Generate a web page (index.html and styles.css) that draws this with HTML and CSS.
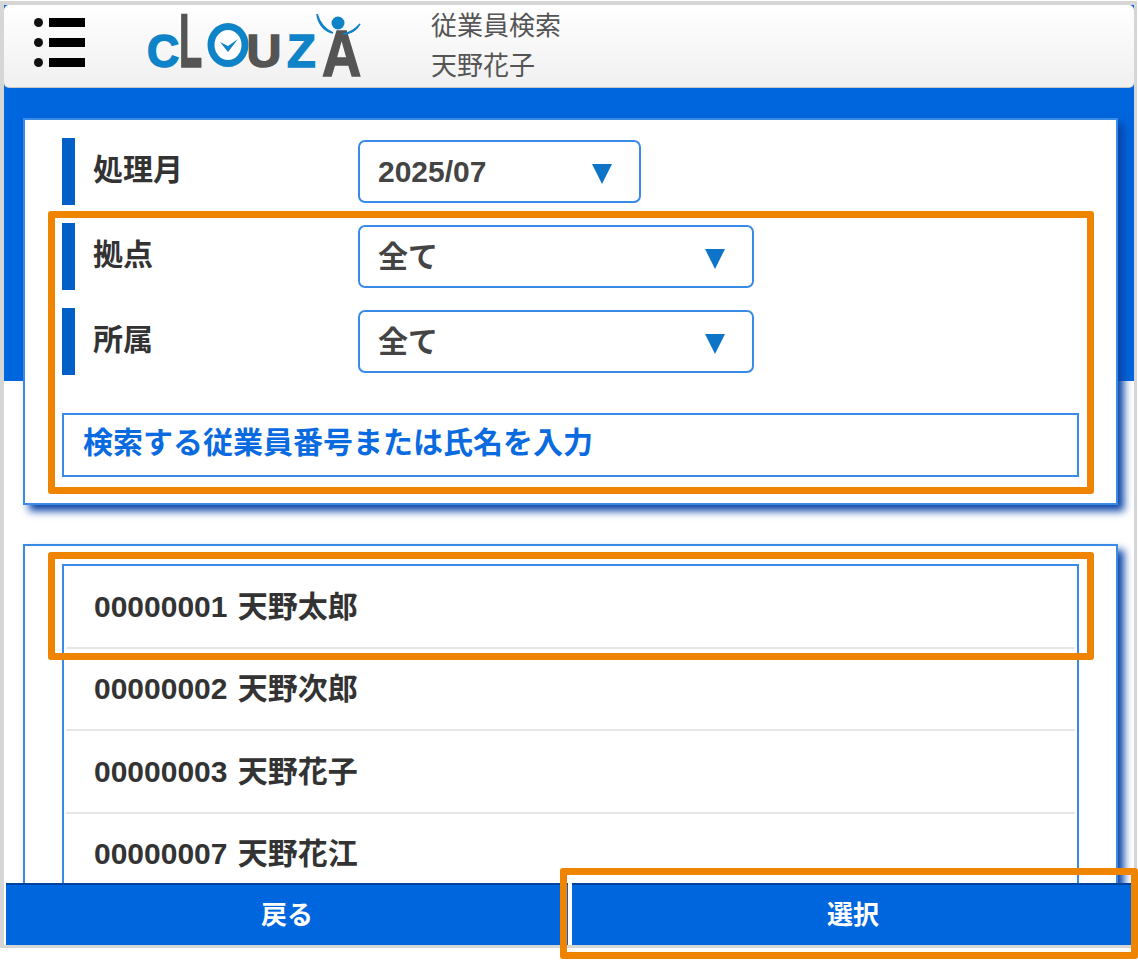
FILE: index.html
```html
<!DOCTYPE html>
<html lang="ja">
<head>
<meta charset="utf-8">
<title>従業員検索</title>
<link rel="stylesheet" href="styles.css">
</head>
<body>
<div class="screen">
  <div class="frame">
    <header class="header-wrap">
      <div class="header">
        <div class="menu" aria-label="menu">
          <div class="menu-row"><span class="dot"></span><span class="bar"></span></div>
          <div class="menu-row"><span class="dot"></span><span class="bar"></span></div>
          <div class="menu-row"><span class="dot"></span><span class="bar"></span></div>
        </div>
        <svg class="logo" width="216" height="70" viewBox="0 0 216 70" aria-label="cLOUZA">
          <g class="logo-text">
            <text class="blue" transform="translate(-1 55) scale(.95 1)" font-size="47">C</text>
            <text class="gray" transform="translate(31 55) scale(.5 1)" font-size="76">L</text>
            <text class="gray" transform="translate(98.6 55) scale(1.03 1)" font-size="47">U</text>
            <text class="blue" transform="translate(139 55)" font-size="47">Z</text>
            <text class="gray" transform="translate(174 64) scale(.85 1)" font-size="64">A</text>
          </g>
          <ellipse cx="80" cy="33" rx="17" ry="18.5" fill="#fff" stroke="#0f83c7" stroke-width="7"/>
          <path d="M72 30 L80 40 L90 27 L80 34 Z" fill="#0f83c7"/>
          <circle cx="190" cy="11" r="6.5" fill="#0f83c7"/>
          <path d="M169 2 C172 12 178 18 185 21 C178 20 170 13 169 2 Z" fill="#0f83c7" stroke="#0f83c7" stroke-width="1.5"/>
          <path d="M212 12 C207 18 201 21 195 22 C202 22 208 19 212 12 Z" fill="#0f83c7" stroke="#0f83c7" stroke-width="1.5"/>
        </svg>
        <div class="title">
          <div>従業員検索</div>
          <div>天野花子</div>
        </div>
      </div>
    </header>

    <main class="main">
      <section class="panel filters">
        <div class="row">
          <div class="label">処理月</div>
          <div class="select short"><span>2025/07</span><i class="arrow"></i></div>
        </div>
        <div class="row">
          <div class="label">拠点</div>
          <div class="select wide"><span>全て</span><i class="arrow"></i></div>
        </div>
        <div class="row">
          <div class="label">所属</div>
          <div class="select wide"><span>全て</span><i class="arrow"></i></div>
        </div>
        <div class="search">検索する従業員番号または氏名を入力</div>
      </section>

      <section class="panel results">
        <ul class="list">
          <li class="item">00000001 天野太郎</li>
          <li class="item">00000002 天野次郎</li>
          <li class="item">00000003 天野花子</li>
          <li class="item">00000007 天野花江</li>
        </ul>
      </section>
    </main>

    <footer class="footer">
      <button class="btn back">戻る</button>
      <button class="btn select-btn">選択</button>
    </footer>
  </div>

  <div class="mark mark-filters"></div>
  <div class="mark mark-first"></div>
  <div class="mark mark-select"></div>
</div>
</body>
</html>
```
FILE: styles.css
```css
* { box-sizing: border-box; }

html, body {
  margin: 0;
  padding: 0;
  background: #fff;
}

body {
  font-family: "Liberation Sans", "Noto Sans CJK JP", sans-serif;
  color: #333;
}

.screen {
  position: relative;
  width: 1138px;
  height: 967px;
  overflow: hidden;
  padding: 1px 1px 0 0;
}

.frame {
  width: 1137px;
  height: 947px;
  border: 3px solid #d6d6d6;
  border-top-width: 4px;
  border-left-width: 4px;
  background: #fff;
}

.header-wrap {
  background: #0066dd;
  height: 83px;
}

.header {
  height: 83px;
  display: flex;
  align-items: flex-start;
  background: linear-gradient(#ffffff, #f0f0f0);
  border-radius: 5px;
  border-bottom: 1px solid #c8c8c8;
}

.menu {
  margin: 13px 0 0 30px;
  width: 51px;
  display: flex;
  flex-direction: column;
  gap: 11px;
}

.menu-row {
  display: flex;
  align-items: center;
  justify-content: space-between;
  height: 9px;
}

.dot {
  width: 9px;
  height: 9px;
  border-radius: 50%;
  background: #111;
}

.bar {
  width: 36px;
  height: 9px;
  background: #000;
}

.logo {
  display: block;
  margin: 7px 0 0 63px;
  overflow: visible;
}

.logo-text text {
  font-family: "Liberation Sans", sans-serif;
  font-weight: 700;
  stroke-width: 1.5px;
}

.logo-text .blue { fill: #0f83c7; stroke: #0f83c7; }
.logo-text .gray { fill: #555; stroke: #555; }

.title {
  margin: 1px 0 0 67px;
  font-size: 26px;
  line-height: 40px;
  color: #555;
  width: 200px;
}

.main {
  height: 795px;
  overflow: hidden;
  padding: 30px 16px 0 19px;
  background: linear-gradient(#0066dd 293px, #fff 293px);
}

.panel {
  border: 2px solid #3a8be8;
  background: #fff;
  box-shadow: 6px 6px 8px #0a45a8;
  padding-left: 37px;
  padding-right: 37px;
}

.filters {
  height: 387px;
  padding-top: 18px;
}

.results {
  margin-top: 39px;
  height: 400px;
  padding-top: 18px;
}

.row {
  display: flex;
  align-items: center;
  height: 67px;
  margin-bottom: 18px;
  border-left: 13px solid #0060c8;
}

.label {
  width: 283px;
  padding-left: 18px;
  padding-bottom: 10px;
  font-size: 30px;
  font-weight: 700;
  color: #333;
}

.select {
  display: flex;
  align-items: center;
  justify-content: space-between;
  width: 396px;
  height: 63px;
  padding: 0 27px 0 18px;
  border: 2px solid #3a8be8;
  border-radius: 7px;
  font-size: 30px;
  font-weight: 700;
  color: #444;
  background: #fff;
}

.select.short {
  width: 283px;
}

.select.wide span {
  margin-bottom: 5px;
}

.arrow {
  width: 0;
  height: 0;
  margin-top: 4px;
  border-left: 10px solid transparent;
  border-right: 10px solid transparent;
  border-top: 20px solid #0e74c8;
}

.search {
  height: 64px;
  margin-top: 38px;
  padding-left: 19px;
  padding-bottom: 10px;
  display: flex;
  align-items: center;
  border: 2px solid #3a8be8;
  font-size: 30px;
  font-weight: 700;
  color: #0a6ae0;
}

.list {
  list-style: none;
  margin: 0;
  padding: 0 2px;
  border: 2px solid #3a8be8;
  border-bottom: 0;
}

.item {
  height: 82.5px;
  padding: 0 0 5px 28px;
  display: flex;
  align-items: center;
  border-bottom: 2px solid #e6e6e6;
  font-size: 30px;
  font-weight: 700;
  word-spacing: 2px;
  color: #333;
}

.footer {
  display: flex;
  height: 62px;
  padding-left: 2px;
  background: #fff;
  gap: 4px;
}

.btn {
  flex: 1;
  border: 0;
  border-top: 2px solid #00439c;
  background: #0066dd;
  color: #fff;
  font-family: inherit;
  font-size: 26px;
  font-weight: 700;
  padding: 0 0 5px;
}

.mark {
  position: absolute;
  border: 7px solid #ee8400;
  border-radius: 3px;
}

.mark-filters { left: 48px; top: 211px; width: 1046px; height: 283px; }
.mark-first { left: 48px; top: 552px; width: 1046px; height: 108px; }
.mark-select { left: 560px; top: 868px; width: 578px; height: 91px; }
```
